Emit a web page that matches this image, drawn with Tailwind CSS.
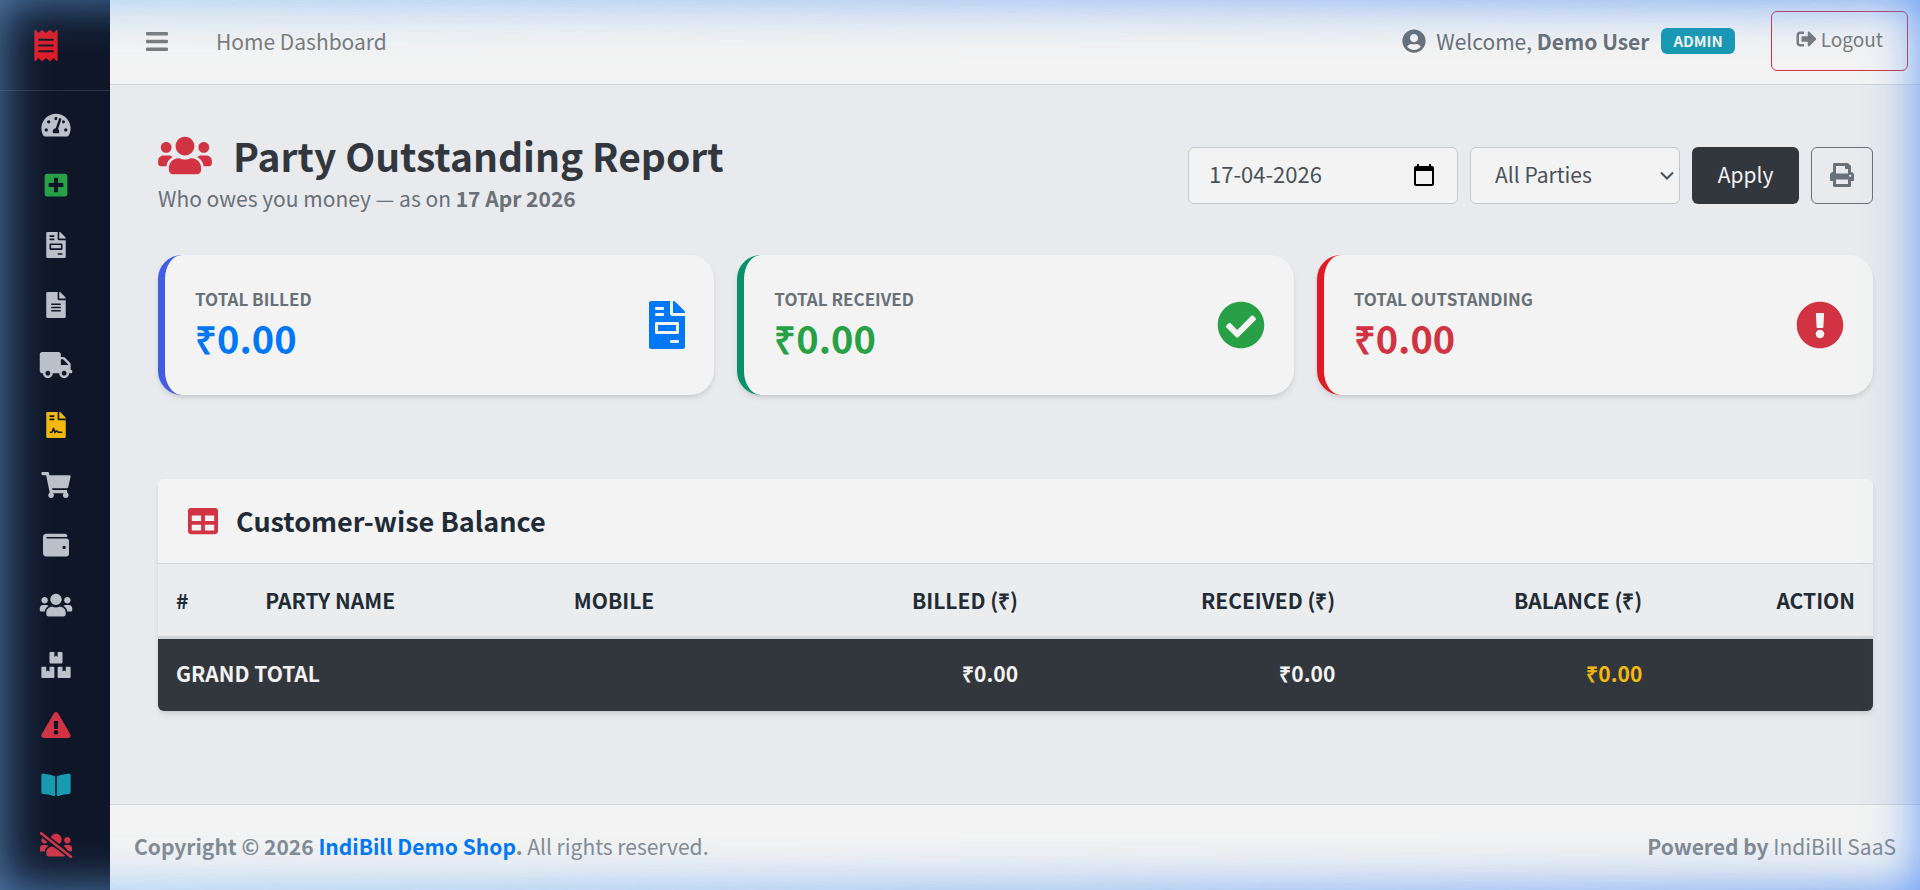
<!DOCTYPE html>
<html lang="en">
<head>
  <meta charset="UTF-8">
  <meta name="viewport" content="width=device-width, initial-scale=1.0">
  <title>Party Outstanding Report</title>
  <script src="https://cdn.jsdelivr.net/npm/@tailwindcss/browser@4"></script>
</head>
<body class="bg-[#e8eaed] font-['Source_Sans_Pro','Noto_Sans_CJK_SC',sans-serif] text-[21px] leading-9 text-[#212b36]">

  <!-- icons -->
  <svg class="hidden" aria-hidden="true">
    <symbol id="receipt" viewBox="0 0 384 512"><path d="M358.4 3.2L320 48 265.6 3.2a15.9 15.9 0 0 0-19.2 0L192 48 137.6 3.2a15.9 15.9 0 0 0-19.2 0L64 48 25.6 3.2C15-4.7 0 2.8 0 16v480c0 13.2 15 20.7 25.6 12.8L64 464l54.4 44.8a15.9 15.9 0 0 0 19.2 0L192 464l54.4 44.8a15.9 15.9 0 0 0 19.2 0L320 464l38.4 44.8c10.5 7.9 25.6.4 25.6-12.8V16c0-13.2-15-20.7-25.6-12.8zM320 360c0 4.4-3.6 8-8 8H72c-4.4 0-8-3.6-8-8v-16c0-4.4 3.6-8 8-8h240c4.4 0 8 3.6 8 8v16zm0-96c0 4.4-3.6 8-8 8H72c-4.4 0-8-3.6-8-8v-16c0-4.4 3.6-8 8-8h240c4.4 0 8 3.6 8 8v16zm0-96c0 4.4-3.6 8-8 8H72c-4.4 0-8-3.6-8-8v-16c0-4.4 3.6-8 8-8h240c4.4 0 8 3.6 8 8v16z"/></symbol>
    <symbol id="gauge" viewBox="0 0 576 512"><path d="M288 32C128.94 32 0 160.94 0 320c0 52.8 14.25 102.26 39.06 144.8 5.61 9.62 16.3 15.2 27.44 15.2h443c11.14 0 21.83-5.58 27.44-15.2C561.75 422.26 576 372.8 576 320c0-159.06-128.94-288-288-288zm0 64c14.71 0 26.58 10.13 30.32 23.65-1.11 2.26-2.64 4.23-3.45 6.67l-9.22 27.67c-5.13 3.49-10.97 6.01-17.64 6.01-17.67 0-32-14.33-32-32S270.33 96 288 96zM96 384c-17.67 0-32-14.33-32-32s14.33-32 32-32 32 14.33 32 32-14.33 32-32 32zm48-160c-17.67 0-32-14.33-32-32s14.33-32 32-32 32 14.33 32 32-14.33 32-32 32zm246.77-72.41l-61.33 184C343.13 347.33 352 364.54 352 384c0 11.72-3.38 22.55-8.88 32H232.88c-5.5-9.45-8.88-20.28-8.88-32 0-33.94 26.5-61.43 59.9-63.59l61.34-184.01c4.17-12.56 17.73-19.45 30.36-15.17 12.57 4.19 19.35 17.79 15.17 30.36zm14.66 57.2l15.52-46.55c3.47-1.29 7.13-2.23 11.05-2.23 17.67 0 32 14.33 32 32s-14.33 32-32 32c-11.38-.01-20.89-6.28-26.57-15.22zM480 384c-17.67 0-32-14.33-32-32s14.33-32 32-32 32 14.33 32 32-14.33 32-32 32z"/></symbol>
    <symbol id="plus-square" viewBox="0 0 448 512"><path d="M400 32H48C21.5 32 0 53.5 0 80v352c0 26.5 21.5 48 48 48h352c26.5 0 48-21.5 48-48V80c0-26.5-21.5-48-48-48zm-32 252c0 6.6-5.4 12-12 12h-92v92c0 6.6-5.4 12-12 12h-56c-6.6 0-12-5.4-12-12v-92H92c-6.6 0-12-5.4-12-12v-56c0-6.6 5.4-12 12-12h92v-92c0-6.6 5.4-12 12-12h56c6.6 0 12 5.4 12 12v92h92c6.6 0 12 5.4 12 12v56z"/></symbol>
    <symbol id="file-invoice" viewBox="0 0 384 512"><path d="M288 256H96v64h192v-64zm89-151L279.1 7c-4.5-4.5-10.6-7-17-7H256v128h128v-6.1c0-6.3-2.5-12.4-7-16.9zm-153 31V0H24C10.7 0 0 10.7 0 24v464c0 13.3 10.7 24 24 24h336c13.3 0 24-10.7 24-24V160H248c-13.2 0-24-10.8-24-24zM64 72c0-4.42 3.58-8 8-8h80c4.42 0 8 3.58 8 8v16c0 4.42-3.58 8-8 8H72c-4.42 0-8-3.58-8-8V72zm0 64c0-4.42 3.58-8 8-8h80c4.42 0 8 3.58 8 8v16c0 4.42-3.58 8-8 8H72c-4.42 0-8-3.58-8-8v-16zm256 304c0 4.42-3.58 8-8 8h-80c-4.42 0-8-3.58-8-8v-16c0-4.42 3.58-8 8-8h80c4.42 0 8 3.58 8 8v16zm0-200v96c0 8.84-7.16 16-16 16H80c-8.84 0-16-7.16-16-16v-96c0-8.84 7.16-16 16-16h224c8.84 0 16 7.16 16 16z"/></symbol>
    <symbol id="file-lines" viewBox="0 0 384 512"><path d="M224 136V0H24C10.7 0 0 10.7 0 24v464c0 13.3 10.7 24 24 24h336c13.3 0 24-10.7 24-24V160H248c-13.2 0-24-10.8-24-24zm64 236c0 6.6-5.4 12-12 12H108c-6.6 0-12-5.4-12-12v-8c0-6.6 5.4-12 12-12h168c6.6 0 12 5.4 12 12v8zm0-64c0 6.6-5.4 12-12 12H108c-6.6 0-12-5.4-12-12v-8c0-6.6 5.4-12 12-12h168c6.6 0 12 5.4 12 12v8zm0-72v8c0 6.6-5.4 12-12 12H108c-6.6 0-12-5.4-12-12v-8c0-6.6 5.4-12 12-12h168c6.6 0 12 5.4 12 12zm96-114.1v6.1H256V0h6.1c6.4 0 12.5 2.5 17 7l97.9 98c4.5 4.5 7 10.6 7 16.9z"/></symbol>
    <symbol id="truck" viewBox="0 0 640 512"><path d="M624 352h-16V243.9c0-12.7-5.1-24.9-14.1-33.9L494 110.1c-9-9-21.2-14.1-33.9-14.1H416V48c0-26.5-21.5-48-48-48H48C21.5 0 0 21.5 0 48v320c0 26.5 21.5 48 48 48h16c0 53 43 96 96 96s96-43 96-96h128c0 53 43 96 96 96s96-43 96-96h48c8.8 0 16-7.2 16-16v-32c0-8.8-7.2-16-16-16zM160 464c-26.5 0-48-21.5-48-48s21.5-48 48-48 48 21.5 48 48-21.5 48-48 48zm320 0c-26.5 0-48-21.5-48-48s21.5-48 48-48 48 21.5 48 48-21.5 48-48 48zm80-208H416V144h44.1l99.9 99.9V256z"/></symbol>
    <symbol id="file-contract" viewBox="0 0 384 512"><path d="M377 105L279.1 7c-4.5-4.5-10.6-7-17-7H256v128h128v-6.1c0-6.3-2.5-12.4-7-16.9zM224 136V0H24C10.7 0 0 10.7 0 24v464c0 13.3 10.7 24 24 24h336c13.3 0 24-10.7 24-24V160H248c-13.2 0-24-10.8-24-24zM64 72c0-4.4 3.6-8 8-8h80c4.400 0 8 3.600 8 8v16c0 4.400-3.600 8-8 8H72c-4.400 0-8-3.600-8-8V72zm0 64c0-4.400 3.600-8 8-8h80c4.400 0 8 3.600 8 8v16c0 4.400-3.600 8-8 8H72c-4.400 0-8-3.600-8-8v-16z"/><path fill="none" stroke="#0f1628" stroke-width="30" stroke-linecap="round" stroke-linejoin="round" d="M80 400h18c11 0 19-6 22-16l23-62 31 84 12-22c8-15 24-12 31-2 7 11 14 16 31 16h56"/></symbol>
    <symbol id="cart" viewBox="0 0 576 512"><path d="M528.12 301.319l47.273-208C578.806 78.301 567.391 64 551.99 64H159.208l-9.166-44.81C147.758 8.021 137.93 0 126.529 0H24C10.745 0 0 10.745 0 24v16c0 13.255 10.745 24 24 24h69.883l70.248 343.435C147.325 417.1 136 435.222 136 456c0 30.928 25.072 56 56 56s56-25.072 56-56c0-15.674-6.447-29.835-16.824-40h209.647C430.447 426.165 424 440.326 424 456c0 30.928 25.072 56 56 56s56-25.072 56-56c0-22.172-12.888-41.332-31.579-50.405l5.517-24.276c3.413-15.018-8.002-29.319-23.403-29.319H218.117l-6.545-32h293.145c11.206 0 20.92-7.754 23.403-18.681z"/></symbol>
    <symbol id="wallet" viewBox="0 0 512 512"><path d="M461.2 128H80c-8.84 0-16-7.16-16-16s7.16-16 16-16h384c8.84 0 16-7.16 16-16 0-26.51-21.49-48-48-48H64C28.65 32 0 60.65 0 96v320c0 35.35 28.65 64 64 64h397.2c28.02 0 50.8-21.53 50.8-48V176c0-26.47-22.78-48-50.8-48zM416 336c-17.67 0-32-14.33-32-32s14.33-32 32-32 32 14.33 32 32-14.33 32-32 32z"/></symbol>
    <symbol id="users" viewBox="0 0 640 512"><path d="M96 224c35.3 0 64-28.7 64-64s-28.7-64-64-64-64 28.7-64 64 28.7 64 64 64zm448 0c35.3 0 64-28.7 64-64s-28.7-64-64-64-64 28.7-64 64 28.7 64 64 64zm32 32h-64c-17.6 0-33.5 7.1-45.1 18.6 40.3 22.1 68.9 62 75.1 109.4h66c17.7 0 32-14.3 32-32v-32c0-35.300-28.700-64-64-64zm-256 0c61.900 0 112-50.100 112-112S381.900 32 320 32 208 82.100 208 144s50.100 112 112 112zm76.800 32h-8.300c-20.800 10-43.900 16-68.500 16s-47.600-6-68.500-16h-8.300C179.600 288 128 339.600 128 403.200V432c0 26.500 21.500 48 48 48h288c26.500 0 48-21.500 48-48v-28.800c0-63.600-51.600-115.200-115.200-115.200zm-223.700-13.400C161.500 263.100 145.600 256 128 256H64c-35.300 0-64 28.700-64 64v32c0 17.700 14.300 32 32 32h65.900c6.300-47.400 34.900-87.300 75.200-109.400z"/></symbol>
    <symbol id="users-slash" viewBox="0 0 640 512"><use href="#users" width="640" height="512"/><path fill="none" stroke="#0f1628" stroke-width="112" d="M0 10l640 494"/><path fill="none" stroke="currentColor" stroke-width="50" stroke-linecap="round" d="M26 24l588 464"/></symbol>
    <symbol id="boxes" viewBox="0 0 576 512"><path d="M560 288h-80v96l-32-21.3-32 21.3v-96h-80c-8.8 0-16 7.2-16 16v192c0 8.8 7.2 16 16 16h224c8.8 0 16-7.2 16-16V304c0-8.8-7.2-16-16-16zm-384-64h224c8.8 0 16-7.2 16-16V16c0-8.8-7.2-16-16-16h-80v96l-32-21.3L256 96V0h-80c-8.8 0-16 7.2-16 16v192c0 8.8 7.2 16 16 16zm64 64h-80v96l-32-21.3L96 384v-96H16c-8.8 0-16 7.2-16 16v192c0 8.8 7.2 16 16 16h224c8.8 0 16-7.2 16-16V304c0-8.8-7.2-16-16-16z"/></symbol>
    <symbol id="warning" viewBox="0 0 576 512"><path d="M569.517 440.013C587.975 472.007 564.806 512 527.94 512H48.054c-36.937 0-59.999-40.055-41.577-71.987L246.423 23.985c18.467-32.009 64.72-31.951 83.154 0l239.94 416.028zM288 354c-25.405 0-46 20.595-46 46s20.595 46 46 46 46-20.595 46-46-20.595-46-46-46zm-43.673-165.346l7.418 136c.347 6.364 5.609 11.346 11.982 11.346h48.546c6.373 0 11.635-4.982 11.982-11.346l7.418-136c.375-6.874-5.098-12.654-11.982-12.654h-63.383c-6.884 0-12.356 5.78-11.981 12.654z"/></symbol>
    <symbol id="book" viewBox="0 0 576 512"><path d="M542.22 32.05c-54.8 3.11-163.72 14.43-230.96 55.59-4.64 2.84-7.27 7.89-7.27 13.17v363.87c0 11.55 12.63 18.85 23.28 13.49 69.18-34.82 169.23-44.32 218.7-46.92 16.89-.89 30.02-14.43 30.02-30.66V62.75c.01-17.71-15.35-31.74-33.77-30.7zM264.73 87.64C197.5 46.48 88.58 35.17 33.78 32.05 15.36 31.01 0 45.04 0 62.75V400.6c0 16.24 13.13 29.78 30.02 30.66 49.49 2.6 149.59 12.11 218.77 46.95 10.62 5.35 23.21-1.94 23.21-13.46V100.63c0-5.29-2.62-10.14-7.27-12.99z"/></symbol>
    <symbol id="bars" viewBox="0 0 448 512"><path d="M16 132h416c8.837 0 16-7.163 16-16V76c0-8.837-7.163-16-16-16H16C7.163 60 0 67.163 0 76v40c0 8.837 7.163 16 16 16zm0 160h416c8.837 0 16-7.163 16-16v-40c0-8.837-7.163-16-16-16H16c-8.837 0-16 7.163-16 16v40c0 8.837 7.163 16 16 16zm0 160h416c8.837 0 16-7.163 16-16v-40c0-8.837-7.163-16-16-16H16c-8.837 0-16 7.163-16 16v40c0 8.837 7.163 16 16 16z"/></symbol>
    <symbol id="user-circle" viewBox="0 0 496 512"><path d="M248 8C111 8 0 119 0 256s111 248 248 248 248-111 248-248S385 8 248 8zm0 96c48.6 0 88 39.4 88 88s-39.4 88-88 88-88-39.4-88-88 39.4-88 88-88zm0 344c-58.7 0-111.3-26.6-146.5-68.2 18.8-35.4 55.6-59.8 98.5-59.8 2.4 0 4.8.4 7.1 1.1 13 4.2 26.6 6.9 40.9 6.9 14.3 0 28-2.7 40.9-6.9 2.3-.7 4.7-1.1 7.1-1.1 42.9 0 79.7 24.4 98.5 59.8C359.3 421.4 306.7 448 248 448z"/></symbol>
    <symbol id="sign-out" viewBox="0 0 512 512"><path d="M497 273L329 441c-15 15-41 4.5-41-17v-96H152c-13.3 0-24-10.7-24-24v-96c0-13.3 10.7-24 24-24h136V88c0-21.4 25.9-32 41-17l168 168c9.3 9.4 9.3 24.6 0 34zM192 436v-40c0-6.6-5.4-12-12-12H96c-17.7 0-32-14.3-32-32V160c0-17.7 14.3-32 32-32h84c6.6 0 12-5.4 12-12V76c0-6.6-5.4-12-12-12H96c-53 0-96 43-96 96v192c0 53 43 96 96 96h84c6.6 0 12-5.4 12-12z"/></symbol>
    <symbol id="print" viewBox="0 0 512 512"><path d="M448 192V77.25c0-8.49-3.37-16.62-9.37-22.63L393.37 9.37c-6-6-14.14-9.37-22.63-9.37H96C78.33 0 64 14.33 64 32v160c-35.35 0-64 28.65-64 64v112c0 8.84 7.16 16 16 16h48v96c0 17.67 14.33 32 32 32h320c17.67 0 32-14.33 32-32v-96h48c8.84 0 16-7.16 16-16V256c0-35.35-28.65-64-64-64zm-64 256H128v-96h256v96zm0-224H128V64h192v48c0 8.84 7.16 16 16 16h48v96zm48 72c-13.25 0-24-10.75-24-24 0-13.26 10.75-24 24-24s24 10.74 24 24c0 13.25-10.75 24-24 24z"/></symbol>
    <symbol id="check-circle" viewBox="0 0 512 512"><path d="M504 256c0 136.967-111.033 248-248 248S8 392.967 8 256 119.033 8 256 8s248 111.033 248 248zM227.314 387.314l184-184c6.248-6.248 6.248-16.379 0-22.627l-22.627-22.627c-6.248-6.249-16.379-6.249-22.628 0L216 308.118l-70.059-70.059c-6.248-6.248-16.379-6.248-22.628 0l-22.627 22.627c-6.248 6.248-6.248 16.379 0 22.627l104 104c6.249 6.249 16.379 6.249 22.628.001z"/></symbol>
    <symbol id="exclamation-circle" viewBox="0 0 512 512"><path d="M504 256c0 136.997-111.043 248-248 248S8 392.997 8 256C8 119.083 119.043 8 256 8s248 111.083 248 248zm-248 50c-25.405 0-46 20.595-46 46s20.595 46 46 46 46-20.595 46-46-20.595-46-46-46zm-43.673-165.346l7.418 136c.347 6.364 5.609 11.346 11.982 11.346h48.546c6.373 0 11.635-4.982 11.982-11.346l7.418-136c.375-6.874-5.098-12.654-11.982-12.654h-63.383c-6.884 0-12.356 5.78-11.981 12.654z"/></symbol>
    <symbol id="table" viewBox="0 0 512 512"><path d="M464 32H48C21.49 32 0 53.49 0 80v352c0 26.51 21.49 48 48 48h416c26.51 0 48-21.49 48-48V80c0-26.51-21.49-48-48-48zM224 416H64v-96h160v96zm0-160H64v-96h160v96zm224 160H288v-96h160v96zm0-160H288v-96h160v96z"/></symbol>
    <symbol id="calendar" viewBox="0 0 20 22"><path d="M18 2h-1V0h-2v2H5V0H3v2H2C.9 2 0 2.900 0 4v16c0 1.100.9 2 2 2h16c1.100 0 2-.9 2-2V4c0-1.100-.9-2-2-2zm0 18H2V7h16v13z"/></symbol>
    <symbol id="chevron" viewBox="0 0 14 10"><path fill="none" stroke="currentColor" stroke-width="2" d="M1 1.500l6 6 6-6"/></symbol>
  </svg>

  <div class="flex h-screen overflow-hidden">
    <aside class="w-[110px] shrink-0 overflow-hidden bg-[#0f1628] text-[#bcc1ca]">
      <a href="#" aria-label="IndiBill" class="flex h-[91px] items-center border-b border-[#2a3140] pl-[34px] text-[#e01b24]">
        <svg class="h-[31px] w-6 fill-current"><use href="#receipt"/></svg>
      </a>
      <nav class="flex flex-col items-center gap-[34px] pl-[2px] pt-[21px]">
        <a href="#" aria-label="Dashboard"><svg class="h-[26px] w-[34px] fill-current"><use href="#gauge"/></svg></a>
        <a href="#" aria-label="New Invoice" class="text-[#28a045]"><svg class="h-[26px] w-[34px] fill-current"><use href="#plus-square"/></svg></a>
        <a href="#" aria-label="Invoices"><svg class="h-[26px] w-[34px] fill-current"><use href="#file-invoice"/></svg></a>
        <a href="#" aria-label="Quotations"><svg class="h-[26px] w-[34px] fill-current"><use href="#file-lines"/></svg></a>
        <a href="#" aria-label="Challans"><svg class="h-[26px] w-[34px] fill-current"><use href="#truck"/></svg></a>
        <a href="#" aria-label="Contracts" class="text-[#f3b90c]"><svg class="h-[26px] w-[34px] fill-current"><use href="#file-contract"/></svg></a>
        <a href="#" aria-label="Purchases"><svg class="h-[26px] w-[34px] fill-current"><use href="#cart"/></svg></a>
        <a href="#" aria-label="Expenses"><svg class="h-[26px] w-[34px] fill-current"><use href="#wallet"/></svg></a>
        <a href="#" aria-label="Parties"><svg class="h-[26px] w-[34px] fill-current"><use href="#users"/></svg></a>
        <a href="#" aria-label="Stock"><svg class="h-[26px] w-[34px] fill-current"><use href="#boxes"/></svg></a>
        <a href="#" aria-label="Low Stock" class="text-[#d13343]"><svg class="h-[26px] w-[34px] fill-current"><use href="#warning"/></svg></a>
        <a href="#" aria-label="Ledger" class="text-[#189ab1]"><svg class="h-[26px] w-[34px] fill-current"><use href="#book"/></svg></a>
        <a href="#" aria-label="Outstanding" class="text-[#d13343]"><svg class="h-[26px] w-[34px] fill-current"><use href="#users-slash"/></svg></a>
      </nav>
    </aside>

    <div class="flex min-w-0 flex-1 flex-col">
      <header class="flex h-[85px] shrink-0 items-center border-b border-[#d1d5da] bg-[#f3f3f3] pb-[2px] pl-9 pr-3 text-[#7a7b7c]">
        <button type="button" aria-label="Toggle menu"><svg class="h-[25px] w-[22px] fill-current"><use href="#bars"/></svg></button>
        <a href="#" class="ml-12">Home Dashboard</a>
        <div class="ml-auto flex items-center text-[#687078]">
          <svg class="h-6 w-6 fill-current"><use href="#user-circle"/></svg>
          <span class="ml-[10px]">Welcome, <b>Demo User</b></span>
          <span class="ml-3 rounded-md bg-[#189ab1] px-3 text-[15px] font-bold leading-[26px] text-[#f3f3f3]">ADMIN</span>
        </div>
        <button type="button" class="ml-9 flex h-[60px] items-center gap-1 rounded-md border border-[#d13343] px-6 pb-1 text-[19px]">
          <svg class="h-5 w-[21px] fill-current"><use href="#sign-out"/></svg>
          Logout
        </button>
      </header>

      <main class="flex-1 pl-12 pr-[47px] pt-[49px]">
        <div class="flex items-center justify-between">
          <div>
            <h1 class="flex items-center gap-[21px] text-[39px] font-bold leading-[43px] text-[#32373d]">
              <svg class="h-[43px] w-[54px] fill-[#d13343]"><use href="#users"/></svg>
              Party Outstanding Report
            </h1>
            <p class="mt-[3px] text-[#687078]">Who owes you money — as on <b>17 Apr 2026</b></p>
          </div>
          <form class="flex gap-3">
            <div class="relative">
              <input type="text" value="17-04-2026" aria-label="As on date" class="h-[57px] w-[270px] rounded-md border border-[#c4c9ce] bg-[#f3f3f3] px-5 pb-1 text-[22px] text-[#495057]">
              <svg class="absolute right-6 top-[17px] h-[22px] w-5"><use href="#calendar"/></svg>
            </div>
            <div class="relative">
              <select aria-label="Party" class="h-[57px] w-[210px] appearance-none rounded-md border border-[#c4c9ce] bg-[#f3f3f3] pb-[2px] pl-6 text-[#495057]">
                <option>All Parties</option>
              </select>
              <svg class="pointer-events-none absolute right-[6px] top-6 h-[10px] w-[14px] text-[#495057]"><use href="#chevron"/></svg>
            </div>
            <button type="button" class="h-[57px] w-[107px] rounded-md bg-[#32373d] pb-[2px] text-[#f3f3f3]">Apply</button>
            <button type="button" aria-label="Print" class="flex h-[57px] w-[62px] items-center justify-center rounded-md border border-[#687078] text-[#687078]">
              <svg class="h-6 w-6 fill-current"><use href="#print"/></svg>
            </button>
          </form>
        </div>

        <div class="mt-[39px] grid grid-cols-3 gap-[23px]">
          <div class="flex h-[140px] items-center justify-between rounded-3xl border-l-[7px] border-[#415de3] bg-[#f3f3f3] pl-[30px] pr-[29px] shadow-md">
            <div>
              <div class="text-[17px] font-bold leading-[26px] text-[#687078]">TOTAL BILLED</div>
              <div class="text-[38px] font-bold leading-[52px] text-[#0077f5]">₹0.00</div>
            </div>
            <svg class="h-12 w-9 fill-[#0077f5]"><use href="#file-invoice"/></svg>
          </div>
          <div class="flex h-[140px] items-center justify-between rounded-3xl border-l-[7px] border-[#05916a] bg-[#f3f3f3] pl-[30px] pr-[29px] shadow-md">
            <div>
              <div class="text-[17px] font-bold leading-[26px] text-[#687078]">TOTAL RECEIVED</div>
              <div class="text-[38px] font-bold leading-[52px] text-[#28a045]">₹0.00</div>
            </div>
            <svg class="h-12 w-12 fill-[#28a045]"><use href="#check-circle"/></svg>
          </div>
          <div class="flex h-[140px] items-center justify-between rounded-3xl border-l-[7px] border-[#e01b24] bg-[#f3f3f3] pl-[30px] pr-[29px] shadow-md">
            <div>
              <div class="text-[17px] font-bold leading-[26px] text-[#687078]">TOTAL OUTSTANDING</div>
              <div class="text-[38px] font-bold leading-[52px] text-[#d13343]">₹0.00</div>
            </div>
            <svg class="h-12 w-12 fill-[#d13343]"><use href="#exclamation-circle"/></svg>
          </div>
        </div>

        <section class="mt-[84px] overflow-hidden rounded-md bg-[#f3f3f3] shadow-md">
          <h2 class="flex h-[85px] items-center gap-[18px] border-b border-[#d1d5da] px-[30px] text-[27px] font-bold">
            <svg class="h-[30px] w-[30px] fill-[#d13343]"><use href="#table"/></svg>
            Customer-wise Balance
          </h2>
          <table class="w-full table-fixed">
            <thead>
              <tr class="h-[73px] border-b-[3px] border-[#d1d5da] bg-[#ebeced] text-right">
                <th class="w-[5.2%] px-[18px] text-left">#</th>
                <th class="w-[18%] px-[18px] text-left">PARTY NAME</th>
                <th class="w-[14%] px-[18px] text-left">MOBILE</th>
                <th class="w-[14%] px-[18px]">BILLED (₹)</th>
                <th class="w-[18.5%] px-[18px]">RECEIVED (₹)</th>
                <th class="w-[17.9%] px-[18px]">BALANCE (₹)</th>
                <th class="px-[18px]">ACTION</th>
              </tr>
            </thead>
            <tfoot>
              <tr class="h-[74px] bg-[#32373d] text-right font-bold text-[#f3f3f3]">
                <td colspan="3" class="px-[18px] pb-1 text-left">GRAND TOTAL</td>
                <td class="px-[18px] pb-1">₹0.00</td>
                <td class="px-[18px] pb-1">₹0.00</td>
                <td class="px-[18px] pb-1 text-[#f3b90c]">₹0.00</td>
                <td></td>
              </tr>
            </tfoot>
          </table>
        </section>
      </main>

      <footer class="flex h-[86px] shrink-0 items-center justify-between border-t border-[#d1d5da] bg-[#f3f3f3] px-6 pb-1 text-[#828b93]">
        <p><b>Copyright © 2026 <a href="#" class="text-[#0077f5]">IndiBill Demo Shop</a>.</b> All rights reserved.</p>
        <p><b>Powered by</b> IndiBill SaaS</p>
      </footer>
    </div>
  </div>

  <!-- glow round the window edge, pale on the left and stronger blue on the right -->
  <div class="pointer-events-none fixed inset-0 shadow-[inset_0_0_50px_rgba(115,183,246,0.7)] [mask-image:linear-gradient(to_right,black,transparent)]"></div>
  <div class="pointer-events-none fixed inset-0 shadow-[inset_0_0_50px_rgba(59,130,246,0.8)] [mask-image:linear-gradient(to_right,transparent,black)]"></div>
</body>
</html>
